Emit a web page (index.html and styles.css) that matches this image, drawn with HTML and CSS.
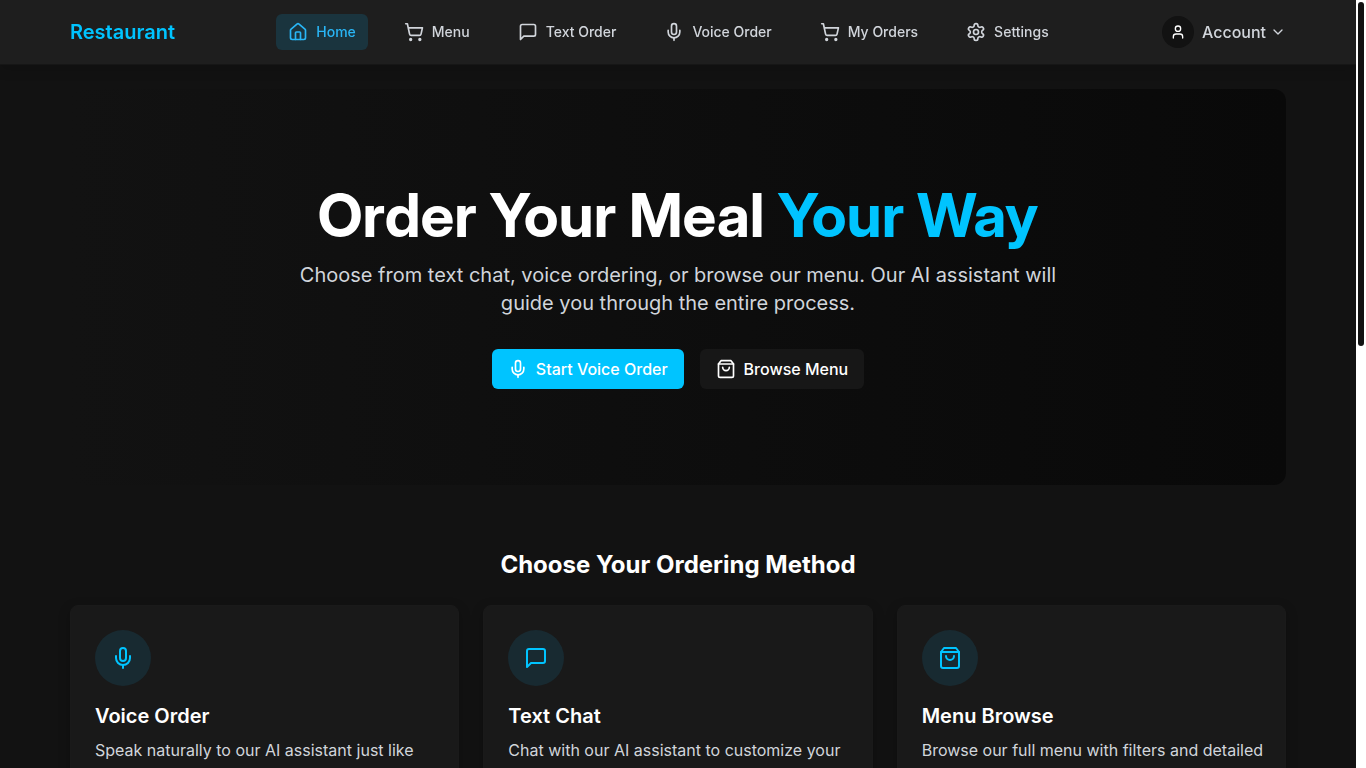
FILE: index.html
```html
<!DOCTYPE html>
<html lang="en">
<head>
  <meta charset="UTF-8" />
  <meta name="viewport" content="width=device-width, initial-scale=1.0" />
  <title>Restaurant</title>
  <link rel="stylesheet" href="styles.css">
</head>
<body>
  <!-- Shared icons -->
  <svg class="sprite" aria-hidden="true">
    <symbol id="icon-home" viewBox="0 0 24 24">
      <path d="M15 21v-8a1 1 0 0 0-1-1h-4a1 1 0 0 0-1 1v8" />
      <path d="M3 10a2 2 0 0 1 .709-1.528l7-5.999a2 2 0 0 1 2.582 0l7 5.999A2 2 0 0 1 21 10v9a2 2 0 0 1-2 2H5a2 2 0 0 1-2-2z" />
    </symbol>
    <symbol id="icon-cart" viewBox="0 0 24 24">
      <circle cx="8" cy="21" r="1" />
      <circle cx="19" cy="21" r="1" />
      <path d="M2.05 2.05h2l2.66 12.42a2 2 0 0 0 2 1.58h9.78a2 2 0 0 0 1.95-1.57l1.65-7.43H5.12" />
    </symbol>
    <symbol id="icon-message" viewBox="0 0 24 24">
      <path d="M21 15a2 2 0 0 1-2 2H7l-4 4V5a2 2 0 0 1 2-2h14a2 2 0 0 1 2 2z" />
    </symbol>
    <symbol id="icon-mic" viewBox="0 0 24 24">
      <path d="M12 2a3 3 0 0 0-3 3v7a3 3 0 0 0 6 0V5a3 3 0 0 0-3-3Z" />
      <path d="M19 10v2a7 7 0 0 1-14 0v-2" />
      <path d="M12 19v3" />
    </symbol>
    <symbol id="icon-settings" viewBox="0 0 24 24">
      <path d="M12.22 2h-.44a2 2 0 0 0-2 2v.18a2 2 0 0 1-1 1.73l-.43.25a2 2 0 0 1-2 0l-.15-.08a2 2 0 0 0-2.73.73l-.22.38a2 2 0 0 0 .73 2.73l.15.1a2 2 0 0 1 1 1.72v.51a2 2 0 0 1-1 1.74l-.15.09a2 2 0 0 0-.73 2.73l.22.38a2 2 0 0 0 2.73.73l.15-.08a2 2 0 0 1 2 0l.43.25a2 2 0 0 1 1 1.73V20a2 2 0 0 0 2 2h.44a2 2 0 0 0 2-2v-.18a2 2 0 0 1 1-1.73l.43-.25a2 2 0 0 1 2 0l.15.08a2 2 0 0 0 2.73-.73l.22-.39a2 2 0 0 0-.73-2.73l-.15-.08a2 2 0 0 1-1-1.74v-.5a2 2 0 0 1 1-1.74l.15-.09a2 2 0 0 0 .73-2.73l-.22-.38a2 2 0 0 0-2.73-.73l-.15.08a2 2 0 0 1-2 0l-.43-.25a2 2 0 0 1-1-1.73V4a2 2 0 0 0-2-2z" />
      <circle cx="12" cy="12" r="3" />
    </symbol>
    <symbol id="icon-user" viewBox="0 0 24 24">
      <path d="M19 21v-2a4 4 0 0 0-4-4H9a4 4 0 0 0-4 4v2" />
      <circle cx="12" cy="7" r="4" />
    </symbol>
    <symbol id="icon-chevron" viewBox="0 0 24 24">
      <path d="m6 9 6 6 6-6" />
    </symbol>
    <symbol id="icon-bag" viewBox="0 0 24 24">
      <path d="M6 2 3 6v14a2 2 0 0 0 2 2h14a2 2 0 0 0 2-2V6l-3-4Z" />
      <path d="M3 6h18" />
      <path d="M16 10a4 4 0 0 1-8 0" />
    </symbol>
  </svg>

  <div class="page">
    <header class="header">
      <div class="container header-inner">
        <a class="logo" href="#">Restaurant</a>
        <nav class="nav">
          <a class="nav-link active" href="#"><svg class="icon"><use href="#icon-home" /></svg>Home</a>
          <a class="nav-link" href="#"><svg class="icon"><use href="#icon-cart" /></svg>Menu</a>
          <a class="nav-link" href="#"><svg class="icon"><use href="#icon-message" /></svg>Text Order</a>
          <a class="nav-link" href="#"><svg class="icon"><use href="#icon-mic" /></svg>Voice Order</a>
          <a class="nav-link" href="#"><svg class="icon"><use href="#icon-cart" /></svg>My Orders</a>
          <a class="nav-link" href="#"><svg class="icon"><use href="#icon-settings" /></svg>Settings</a>
        </nav>
        <button class="account" type="button">
          <span class="avatar"><svg class="icon icon-sm"><use href="#icon-user" /></svg></span>
          <span class="account-label">Account<svg class="icon icon-sm"><use href="#icon-chevron" /></svg></span>
        </button>
      </div>
    </header>

    <main class="container main">
      <section class="hero">
        <h1>Order Your Meal <span class="accent">Your Way</span></h1>
        <p>Choose from text chat, voice ordering, or browse our menu. Our AI assistant will guide you through the entire process.</p>
        <div class="hero-actions">
          <button class="btn btn-primary" type="button"><svg class="icon"><use href="#icon-mic" /></svg>Start Voice Order</button>
          <button class="btn btn-secondary" type="button"><svg class="icon"><use href="#icon-bag" /></svg>Browse Menu</button>
        </div>
      </section>

      <section class="methods">
        <h2>Choose Your Ordering Method</h2>
        <div class="cards">
          <article class="card">
            <div class="card-icon"><svg class="icon icon-lg"><use href="#icon-mic" /></svg></div>
            <h3>Voice Order</h3>
            <p>Speak naturally to our AI assistant just like</p>
          </article>
          <article class="card">
            <div class="card-icon"><svg class="icon icon-lg"><use href="#icon-message" /></svg></div>
            <h3>Text Chat</h3>
            <p>Chat with our AI assistant to customize your</p>
          </article>
          <article class="card">
            <div class="card-icon"><svg class="icon icon-lg"><use href="#icon-bag" /></svg></div>
            <h3>Menu Browse</h3>
            <p>Browse our full menu with filters and detailed</p>
          </article>
        </div>
      </section>
    </main>
  </div>
  <div class="scrollbar" aria-hidden="true">
    <div class="scrollbar-thumb"></div>
  </div>
</body>
</html>
```
FILE: styles.css
```css
* {
  box-sizing: border-box;
}
body, html {
  height: 100%;
  margin: 0;
}
body {
  display: flex;
  font-family: Inter, sans-serif;
  font-size: 16px;
  line-height: 24px;
  color: #fff;
  background: #121212;
  overflow: hidden;
}
h1, h2, h3, p {
  margin: 0;
}
a {
  text-decoration: none;
}
button {
  font: inherit;
  border: none;
  cursor: pointer;
}
.sprite {
  display: none;
}
.page {
  flex: 1;
  min-width: 0;
  height: 100%;
  overflow-y: auto;
  scrollbar-width: none;
}
.scrollbar {
  flex: none;
  width: 10px;
  padding: 2px;
  background: #fff;
}
.scrollbar-thumb {
  height: 45%;
  border-radius: 3px;
  background: #121212;
}
.icon {
  width: 20px;
  height: 20px;
  flex: none;
  fill: none;
  stroke: currentColor;
  stroke-width: 2;
  stroke-linecap: round;
  stroke-linejoin: round;
}
.icon-sm {
  width: 16px;
  height: 16px;
}
.icon-lg {
  width: 24px;
  height: 24px;
}
.container {
  max-width: 1280px;
  margin: 0 auto;
  padding: 0 32px;
}

/* Header */
.header {
  position: sticky;
  top: 0;
  z-index: 10;
  background: #1e1e1e;
  border-bottom: 1px solid #161616;
  box-shadow: 0 4px 12px rgba(0, 0, 0, 0.15);
}
.header-inner {
  display: flex;
  align-items: center;
  justify-content: space-between;
  height: 64px;
}
.logo {
  font-size: 20px;
  line-height: 28px;
  font-weight: 600;
  color: #00c4ff;
}
.nav {
  display: flex;
  gap: 24px;
}
.nav-link {
  display: flex;
  align-items: center;
  gap: 8px;
  padding: 8px 12px;
  border-radius: 6px;
  font-size: 14px;
  line-height: 20px;
  font-weight: 500;
  color: #d1d5db;
}
.nav-link.active {
  color: #29b6f6;
  background: #1a343e;
}
.account {
  display: flex;
  align-items: center;
  gap: 8px;
  padding: 0;
  font-weight: 500;
  color: #d1d5db;
  background: none;
}
.avatar {
  display: flex;
  align-items: center;
  justify-content: center;
  width: 32px;
  height: 32px;
  border-radius: 50%;
  color: #fff;
  background: #121212;
}
.account-label {
  display: flex;
  align-items: center;
  gap: 4px;
}

/* Hero */
.main {
  padding-top: 24px;
  padding-bottom: 64px;
}
.hero {
  padding: 96px 32px;
  border-radius: 12px;
  text-align: center;
  background: linear-gradient(to right, #121212, #090909);
}
.hero h1 {
  font-family: "Inter Display", Inter, sans-serif;
  font-size: 60px;
  line-height: 60px;
  font-weight: 700;
}
.accent {
  color: #00c4ff;
}
.hero p {
  max-width: 768px;
  margin: 16px auto 0;
  font-size: 20px;
  line-height: 28px;
  color: #d1d5db;
}
.hero-actions {
  display: flex;
  justify-content: center;
  gap: 16px;
  margin-top: 32px;
}
.btn {
  display: flex;
  align-items: center;
  gap: 8px;
  padding: 8px 16px;
  border-radius: 6px;
  font-weight: 500;
  color: #fff;
}
.btn-primary {
  background: #00c4ff;
}
.btn-secondary {
  background: #171717;
}

/* Ordering methods */
.methods {
  margin-top: 64px;
}
.methods h2 {
  font-size: 24px;
  line-height: 32px;
  font-weight: 700;
  text-align: center;
}
.cards {
  display: grid;
  grid-template-columns: repeat(3, 1fr);
  gap: 24px;
  margin-top: 24px;
}
.card {
  padding: 24px 16px 24px 24px;
  border: 1px solid #1a1a1a;
  border-radius: 8px;
  background: #191919;
  box-shadow: 0 4px 12px rgba(0, 0, 0, 0.25);
}
.card-icon {
  display: flex;
  align-items: center;
  justify-content: center;
  width: 56px;
  height: 56px;
  border-radius: 50%;
  color: #00c4ff;
  background: #182a31;
}
.card h3 {
  margin-top: 16px;
  font-size: 20px;
  line-height: 28px;
  font-weight: 600;
}
.card p {
  margin-top: 8px;
  color: #d1d5db;
}
```
